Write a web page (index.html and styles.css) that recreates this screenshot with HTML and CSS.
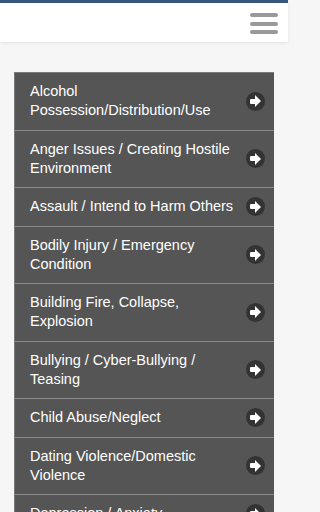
FILE: index.html
```html
<!DOCTYPE html>
<html>
<head>
<meta charset="utf-8">
<meta name="viewport" content="width=device-width, initial-scale=1">
<link rel="stylesheet" href="styles.css">
</head>
<body>
<div class="page">
<header class="topbar">
  <button class="menu" aria-label="Menu">
    <span></span><span></span><span></span>
  </button>
</header>
<main class="content">
  <ul class="list">
    <li class="row"><span class="label">Alcohol Possession/Distribution/Use</span><span class="go"></span></li>
    <li class="row"><span class="label">Anger Issues / Creating Hostile Environment</span><span class="go"></span></li>
    <li class="row"><span class="label">Assault / Intend to Harm Others</span><span class="go"></span></li>
    <li class="row"><span class="label">Bodily Injury / Emergency Condition</span><span class="go"></span></li>
    <li class="row"><span class="label">Building Fire, Collapse, Explosion</span><span class="go"></span></li>
    <li class="row"><span class="label">Bullying / Cyber-Bullying / Teasing</span><span class="go"></span></li>
    <li class="row"><span class="label">Child Abuse/Neglect</span><span class="go"></span></li>
    <li class="row"><span class="label">Dating Violence/Domestic Violence</span><span class="go"></span></li>
    <li class="row"><span class="label">Depression / Anxiety</span><span class="go"></span></li>
  </ul>
</main>
</div>
</body>
</html>
```

FILE: styles.css
```css
html, body {
  margin: 0;
  padding: 0;
  background: #f6f6f6;
  font-family: "Liberation Sans", Arial, sans-serif;
  overflow: hidden;
  height: 512px;
}
.page {
  width: 288px;
  max-width: 100%;
}
.topbar {
  background: #ffffff;
  border-top: 3px solid #38577c;
  height: 39px;
  display: flex;
  justify-content: flex-end;
  align-items: center;
  box-shadow: 0 1px 3px rgba(0,0,0,0.08);
  position: relative;
  z-index: 1;
}
.menu {
  background: none;
  border: 0;
  padding: 0;
  margin-right: 10px;
  width: 28px;
  display: flex;
  flex-direction: column;
  gap: 4.5px;
  margin-top: 2px;
}
.menu span {
  display: block;
  height: 4px;
  border-radius: 2px;
  background: #999999;
}
.content {
  padding: 30px 14px 0 14px;
}
.list {
  list-style: none;
  margin: 0;
  padding: 0;
  background: #555555;
  border-left: 1px solid #7a7a7a;
  border-top: 1px solid #7a7a7a;
}
.row {
  display: flex;
  align-items: center;
  padding: 9px 9px 9.5px 15px;
  border-bottom: 1px solid #8a8a8a;
  color: #ffffff;
  font-size: 14.5px;
  line-height: 19px;
}
.label {
  flex: 1;
}
.go {
  flex: none;
  width: 19px;
  height: 19px;
  border-radius: 50%;
  background: #333333;
  position: relative;
  margin-left: 8px;
}
.go::before {
  content: "";
  position: absolute;
  left: 3.5px;
  top: 7px;
  width: 6.5px;
  height: 5px;
  border-radius: 1px 0 0 1px;
  background: #ffffff;
}
.go::after {
  content: "";
  position: absolute;
  left: 9px;
  top: 3.5px;
  width: 0;
  height: 0;
  border-top: 6px solid transparent;
  border-bottom: 6px solid transparent;
  border-left: 6.5px solid #ffffff;
}
```
